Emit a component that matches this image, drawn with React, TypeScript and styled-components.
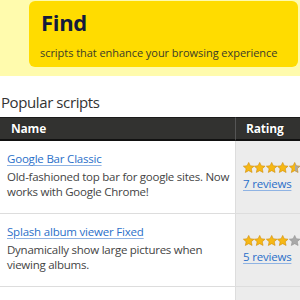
import React from "react";
import styled, { createGlobalStyle } from "styled-components";

const Global = createGlobalStyle`
  html, body { margin: 0; padding: 0; background: #fff; }
  body { font-family: "Open Sans", "Noto Sans", sans-serif; width: 300px; overflow: hidden; }
`;

const Band = styled.div`
  background: #fffbad;
  height: 76px;
  padding: 1px 2px 0 29px;
  box-sizing: border-box;
`;

const Box = styled.div`
  background: #ffdc00;
  height: 66px;
  border-radius: 6px;
  padding: 7px 12px 0 12px;
  box-sizing: border-box;
`;

const Title = styled.h1`
  margin: 0;
  font-size: 22px;
  line-height: 28px;
  font-weight: 700;
  letter-spacing: -0.3px;
  color: #141a3c;
`;

const Sub = styled.p`
  margin: 10px 0 0 -1px;
  font-size: 11px;
  line-height: 14px;
  letter-spacing: -0.05px;
  color: #3b3b2a;
  white-space: nowrap;
`;

const Heading = styled.h2`
  margin: 14px 0 0 1px;
  font-size: 15px;
  font-weight: 400;
  line-height: 24px;
  letter-spacing: -0.4px;
  color: #333;
`;

const Table = styled.div`
  display: grid;
  grid-template-columns: 235px 1fr;
  margin-top: 3px;
`;

const HeadCell = styled.div<{ $pad: number; $divider?: boolean }>`
  background: #323230;
  color: #fff;
  font-weight: 700;
  font-size: 12px;
  letter-spacing: -0.2px;
  height: 24px;
  line-height: 22px;
  padding-left: ${(p) => p.$pad}px;
  border-top: 1px solid #1a1a1a;
  border-bottom: 2px solid #111;
  border-left: ${(p) => (p.$divider ? "1px solid #555" : "none")};
  box-sizing: border-box;
  text-shadow: 0 0 1px #000;
`;

const NameCell = styled.div`
  padding: 5px 2px 14px 7px;
  border-bottom: 1px solid #ddd;
  box-sizing: border-box;
`;

const RatingCell = styled.div`
  background: #ececec;
  border-left: 1px solid #ddd;
  border-bottom: 1px solid #ddd;
  padding-left: 7px;
  display: flex;
  flex-direction: column;
  justify-content: center;
  gap: 2px;
`;

const Link = styled.a`
  color: #2a6fc9;
  font-size: 11.5px;
  line-height: 18px;
  letter-spacing: -0.2px;
  text-decoration: underline;
  text-decoration-color: #8fb3e3;
  text-underline-offset: 2px;
  white-space: nowrap;
`;

const Desc = styled.p`
  margin: 1px 0 0;
  font-size: 11.5px;
  line-height: 15px;
  letter-spacing: -0.25px;
  color: #444;
`;

const Stars = styled.div`
  display: flex;
  height: 11px;
`;

const Star = ({ fill, id }: { fill: number; id: string }) => (
  <svg width="11.4" height="11" viewBox="0 0 24 23">
    <defs>
      <linearGradient id={id} x1="0" x2="1" y1="0" y2="0">
        <stop offset={fill} stopColor="#f6b816" />
        <stop offset={fill} stopColor="#a9a9a9" />
      </linearGradient>
    </defs>
    <path
      d="M12 0.8l3.4 7 7.9.9-5.9 5.4 1.7 7.9L12 18.1l-7.1 3.9 1.7-7.9L0.7 8.7l7.9-.9z"
      fill={`url(#${id})`}
      stroke={fill > 0 ? "#d08a06" : "#8f8f8f"}
      strokeWidth="1.2"
      strokeLinejoin="round"
    />
  </svg>
);

const Rating = ({ value, name }: { value: number; name: string }) => (
  <Stars>
    {[0, 1, 2, 3, 4].map((i) => (
      <Star
        key={i}
        id={`${name}-${i}`}
        fill={Math.max(0, Math.min(1, value - i))}
      />
    ))}
  </Stars>
);

const rows = [
  {
    key: "r1",
    name: "Google Bar Classic",
    desc: "Old-fashioned top bar for google sites. Now works with Google Chrome!",
    rating: 4.5,
    reviews: "7 reviews",
  },
  {
    key: "r2",
    name: "Splash album viewer Fixed",
    desc: "Dynamically show large pictures when viewing albums.",
    rating: 4,
    reviews: "5 reviews",
  },
  {
    key: "r3",
    name: "Frontier Ville and Treasure Island Wall Manager",
    desc: "Manage your wall posts.",
    rating: 4,
    reviews: "3 reviews",
  },
];

export default function App() {
  return (
    <>
      <Global />
      <Band>
        <Box>
          <Title>Find</Title>
          <Sub>scripts that enhance your browsing experience</Sub>
        </Box>
      </Band>
      <Heading>Popular scripts</Heading>
      <Table>
        <HeadCell $pad={11}>Name</HeadCell>
        <HeadCell $pad={10} $divider>
          Rating
        </HeadCell>
        {rows.map((r) => (
          <React.Fragment key={r.key}>
            <NameCell>
              <Link href="#">{r.name}</Link>
              <Desc>{r.desc}</Desc>
            </NameCell>
            <RatingCell>
              <Rating value={r.rating} name={r.key} />
              <Link href="#">{r.reviews}</Link>
            </RatingCell>
          </React.Fragment>
        ))}
      </Table>
    </>
  );
}
